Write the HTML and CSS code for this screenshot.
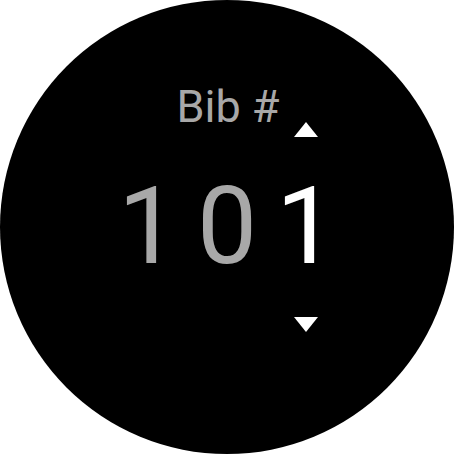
FILE: index.html
```html
<html>
  <head>
    <link rel="stylesheet" href="styles.css">
  </head>
  <body>
    <div class="watch">
      <div class="picker">
        <div class="label">Bib #</div>
        <div class="arrow up">
          <svg width="24" height="15" viewBox="0 0 24 15"><polygon points="12,0 24,15 0,15" fill="#fff"/></svg>
        </div>
        <div class="digit">1</div>
        <div class="digit">0</div>
        <div class="digit current">1</div>
        <div class="arrow down">
          <svg width="24" height="15" viewBox="0 0 24 15"><polygon points="0,0 24,0 12,15" fill="#fff"/></svg>
        </div>
      </div>
    </div>
  </body>
</html>
```

FILE: styles.css
```css
body {
  margin: 0;
  background: #fff;
}

.watch {
  width: 454px;
  height: 454px;
  border-radius: 50%;
  background: #000;
  display: flex;
  flex-direction: column;
  align-items: center;
  padding-top: 84px;
  box-sizing: border-box;
  font-family: Roboto, "Noto Sans", sans-serif;
}

.picker {
  display: grid;
  grid-template-columns: repeat(3, 79px);
  grid-template-rows: 54px auto auto;
}

.label {
  grid-column: 1 / -1;
  grid-row: 1;
  text-align: center;
  font-size: 45px;
  line-height: 1;
  color: #a8a8a8;
  padding-left: 2px;
}

.arrow {
  grid-column: 3;
  display: flex;
  justify-content: center;
}

.arrow svg {
  display: block;
}

.arrow.up {
  grid-row: 1;
  align-self: end;
  margin-bottom: 1px;
}

.arrow.down {
  grid-row: 3;
  margin-top: 37px;
}

.digit {
  grid-row: 2;
  margin-top: 35px;
  text-align: center;
  font-size: 107px;
  line-height: 1;
  color: #a8a8a8;
}

.digit.current {
  color: #fff;
}
```
